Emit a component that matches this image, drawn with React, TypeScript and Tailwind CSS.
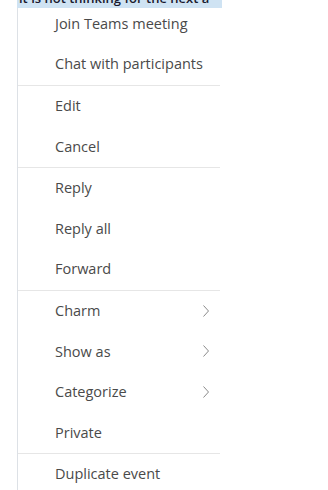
import React from "react";

type Item = { label: string; sub?: boolean };

const groups: Item[][] = [
  [{ label: "Join Teams meeting" }, { label: "Chat with participants" }],
  [{ label: "Edit" }, { label: "Cancel" }],
  [{ label: "Reply" }, { label: "Reply all" }, { label: "Forward" }],
  [
    { label: "Charm", sub: true },
    { label: "Show as", sub: true },
    { label: "Categorize", sub: true },
    { label: "Private" },
  ],
  [{ label: "Duplicate event" }],
];

function Chevron() {
  return (
    <svg width="8" height="14" viewBox="0 0 8 14" className="mr-[10px]">
      <path d="M1.5 1.5 L6.5 7 L1.5 12.5" fill="none" stroke="#8a8a8a" strokeWidth="1" />
    </svg>
  );
}

export default function App() {
  return (
    <div
      className="w-[328px] h-[490px] bg-white overflow-hidden"
      style={{ fontFamily: '"Open Sans", "Noto Sans", sans-serif' }}
    >
      {/* selected text behind the menu, cut off at the top */}
      <div className="ml-[17px] w-[205px] h-[8px] bg-[#cfe3f3] overflow-hidden relative">
        <div className="absolute left-[2px] top-[-11px] text-[13px] text-[#1a1a2e] whitespace-nowrap font-semibold">
          it is not thinking for the next a
        </div>
      </div>
      <div className="ml-[17px] w-[203px] border-l border-[#dde1e6] bg-white">
        {groups.map((g, gi) => (
          <div key={gi} className={gi > 0 ? "border-t border-[#e6e6e6]" : ""}>
            {g.map((it, i) => (
              <div
                key={it.label}
                className={`flex items-center justify-between pl-[37px] text-[14.5px] text-[#4a4a4a] ${
                  gi === 0 && i === 0 ? "h-[36px] pb-[4px]" : "h-[40.6px]"
                }`}
              >
                <span>{it.label}</span>
                {it.sub && <Chevron />}
              </div>
            ))}
          </div>
        ))}
      </div>
    </div>
  );
}
